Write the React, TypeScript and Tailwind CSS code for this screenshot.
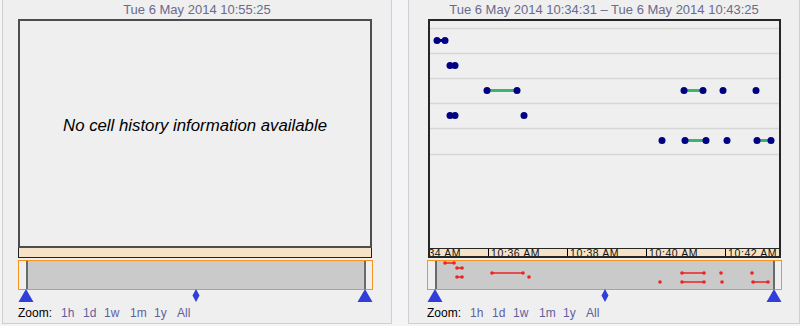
import React from "react";

const font = { fontFamily: '"Liberation Sans", Arial, sans-serif' };

type Pt = { x: number; x2?: number };

// rows of the right chart, x in px inside the plot area
const rows: Pt[][] = [
  [{ x: 7, x2: 15 }],
  [{ x: 20, x2: 25 }],
  [{ x: 57, x2: 87 }, { x: 254, x2: 273 }, { x: 293 }, { x: 326 }],
  [{ x: 20, x2: 25 }, { x: 94 }],
  [{ x: 232 }, { x: 255, x2: 276 }, { x: 297 }, { x: 327, x2: 341 }],
];

// navigator marks: [y, x, x2?]
const navMarks: [number, number, number?][] = [
  [3, 16, 25],
  [8, 28, 33],
  [13, 63, 94],
  [13, 253, 275],
  [13, 292],
  [13, 323],
  [17, 28, 33],
  [17, 100],
  [22, 231],
  [22, 253, 275],
  [22, 293],
  [22, 324, 339],
];

const ticks = ["10:34 AM", "10:36 AM", "10:38 AM", "10:40 AM", "10:42 AM"];

function Title({ text }: { text: string }) {
  return (
    <div className="h-[19px] text-center text-[13px] leading-[19px] text-[#6a6a8c]" style={font}>
      {text}
    </div>
  );
}

function Handles() {
  return (
    <svg width={355} height={14} className="block -mt-px">
      <polygon points="8,0 15.5,13 0.5,13" fill="#2f3fd8" />
      <polygon points="347,0 354.5,13 339.5,13" fill="#2f3fd8" />
      <polygon points="178,0 181.5,6.5 178,13 174.5,6.5" fill="#2f3fd8" />
    </svg>
  );
}

function Navigator({ marks }: { marks?: boolean }) {
  return (
    <div className="mt-[2px] flex h-[30px] w-[355px] border border-[#f7941d] bg-[#efefef]">
      <div className="w-[7px]" />
      <div className="relative flex-1 border-x-2 border-[#6a6a6a] bg-[#cacaca]">
        {marks && (
          <svg width={355} height={28} className="absolute -left-[8px] -top-px">
            {navMarks.map(([y, x, x2], i) => (
              <g key={i}>
                {x2 !== undefined && <line x1={x} y1={y} x2={x2} y2={y} stroke="#ee2222" strokeWidth={1.5} />}
                <circle cx={x} cy={y} r={1.8} fill="#ee2222" />
                {x2 !== undefined && <circle cx={x2} cy={y} r={1.8} fill="#ee2222" />}
              </g>
            ))}
          </svg>
        )}
      </div>
      <div className="w-[6px]" />
    </div>
  );
}

function ZoomRow() {
  const btns: [string, string][] = [
    ["1h", "w-[22px]"],
    ["1d", "w-[21px]"],
    ["1w", "w-[26px]"],
    ["1m", "w-[24px]"],
    ["1y", "w-[23px]"],
    ["All", "w-[24px]"],
  ];
  return (
    <div className="mt-[3px] flex text-[12px] leading-[14px]" style={font}>
      <span className="w-[43px] text-black">Zoom:</span>
      {btns.map(([t, w]) => (
        <span key={t} className={`${w} text-[#5f5fa0]`}>
          {t}
        </span>
      ))}
    </div>
  );
}

function EmptyPanel() {
  return (
    <div className="ml-[2px] h-[324px] w-[390px] border-x border-b border-[#cfcfcf] bg-[#efefef]">
      <Title text="Tue 6 May 2014 10:55:25" />
      <div className="ml-[15px] w-[354px]">
        <div className="flex h-[229px] items-center justify-center border-2 border-[#4d4d4d]">
          <span className="-mt-[16px] text-[16.8px] italic text-black" style={font}>
            No cell history information available
          </span>
        </div>
        <div className="h-[10px] border-x border-b border-[#222] bg-[#f6e2c6]" />
      </div>
      <div className="ml-[15px]">
        <Navigator />
        <Handles />
        <ZoomRow />
      </div>
    </div>
  );
}

function HistoryPanel() {
  return (
    <div className="ml-[16px] h-[324px] w-[392px] border-x border-b border-[#cfcfcf] bg-[#efefef]">
      <Title text="Tue 6 May 2014 10:34:31 – Tue 6 May 2014 10:43:25" />
      <div className="ml-[19px] w-[353px]">
        <div className="h-[229px] border-2 border-b-0 border-[#262626]">
          <svg width={349} height={227} className="block">
            {[7, 32, 57, 82, 107, 133].map((y) => (
              <line key={y} x1={0} y1={y + 0.5} x2={349} y2={y + 0.5} stroke="#d6d6d6" strokeWidth={1.5} />
            ))}
            {rows.map((row, ri) => {
              const y = 19.5 + ri * 25;
              return row.map((p, i) => (
                <g key={`${ri}-${i}`}>
                  {p.x2 !== undefined && (
                    <line
                      x1={p.x}
                      y1={y}
                      x2={p.x2}
                      y2={y}
                      stroke={p.x2 - p.x > 10 ? "#3cb46e" : "#000080"}
                      strokeWidth={3}
                    />
                  )}
                  <circle cx={p.x} cy={y} r={3.5} fill="#000080" />
                  {p.x2 !== undefined && <circle cx={p.x2} cy={y} r={3.5} fill="#000080" />}
                </g>
              ));
            })}
          </svg>
        </div>
        <div className="relative h-[10px] overflow-hidden border-2 border-t border-[#262626] bg-[#f6e2c6]">
          <div className="absolute -left-[21px] top-0 flex">
            {ticks.map((t) => (
              <div
                key={t}
                className="h-[7px] w-[79px] border-l border-black pl-[2px] text-[10.5px] leading-[8px] tracking-[0.6px] text-[#111]"
                style={font}
              >
                {t}
              </div>
            ))}
          </div>
        </div>
      </div>
      <div className="ml-[18px]">
        <Navigator marks />
        <Handles />
        <ZoomRow />
      </div>
    </div>
  );
}

export default function App() {
  return (
    <div className="flex h-[326px] w-[800px] bg-[#f4f3f5]">
      <EmptyPanel />
      <HistoryPanel />
    </div>
  );
}
